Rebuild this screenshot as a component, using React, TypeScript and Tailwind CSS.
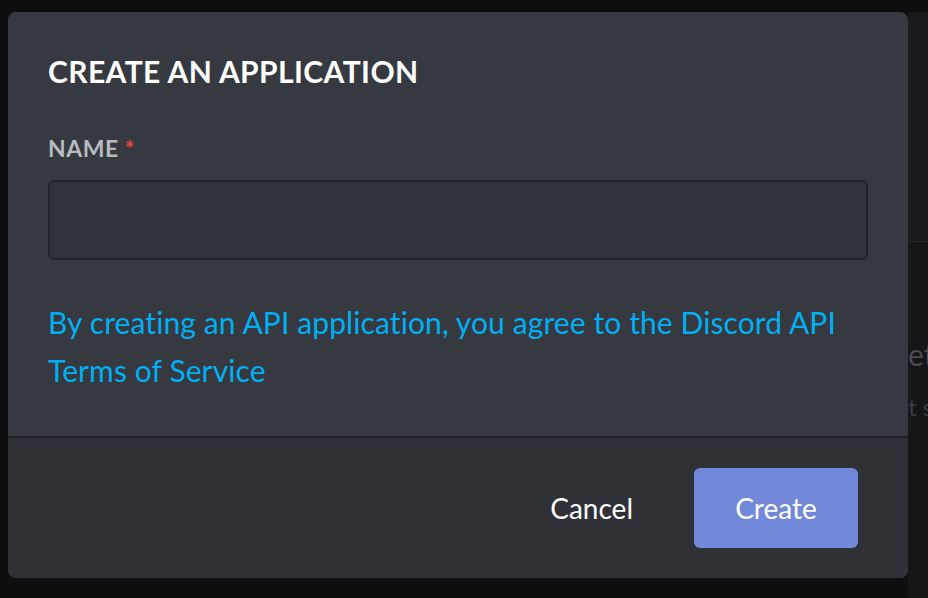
import React from "react";

export default function App() {
  return (
    <div className="flex h-[598px] w-[928px] overflow-hidden bg-[#0e0e10] pl-2 pt-3 font-['Lato',sans-serif]">
      <div className="flex h-[566px] w-[900px] shrink-0 flex-col overflow-hidden rounded-lg bg-[#36393f]">
        <div className="flex flex-1 flex-col px-10 pt-[42px]">
          <h2 className="text-[30px] font-bold leading-[34px] tracking-[0.4px] text-white">CREATE AN APPLICATION</h2>
          <label className="mt-[48px] text-[23px] font-bold leading-[24px] tracking-[0.5px] text-[#b9bbbe]">
            NAME <span className="text-[#f04747]">*</span>
          </label>
          <input
            className="mt-[20px] h-[80px] w-full rounded-md border-2 border-[#222327] bg-[#303339] px-4 text-[28px] text-white outline-none"
            type="text"
          />
          <p className="mt-[38px] text-[30px] leading-[48px] tracking-[0.1px] text-[#00b0f4]">
            By creating an API application, you agree to the Discord API Terms of Service
          </p>
        </div>
        <div className="flex h-[142px] items-center justify-end gap-[61px] border-t-2 border-[#202225] bg-[#2f3136] pr-[50px]">
          <button className="text-[28px] text-white">Cancel</button>
          <button className="h-[80px] w-[164px] rounded-md bg-[#7289da] text-[28px] text-white">Create</button>
        </div>
      </div>
      <div className="flex min-w-0 flex-1 flex-col overflow-hidden bg-[#151618] text-[#4a4c50]">
        <div className="h-[230px] border-b border-[#26272b] bg-[#1a1b1e]" />
        <div className="mt-[90px] whitespace-nowrap text-[30px]">et,</div>
        <div className="mt-[12px] whitespace-nowrap text-[24px] text-[#3a3c40]">t s</div>
      </div>
    </div>
  );
}
